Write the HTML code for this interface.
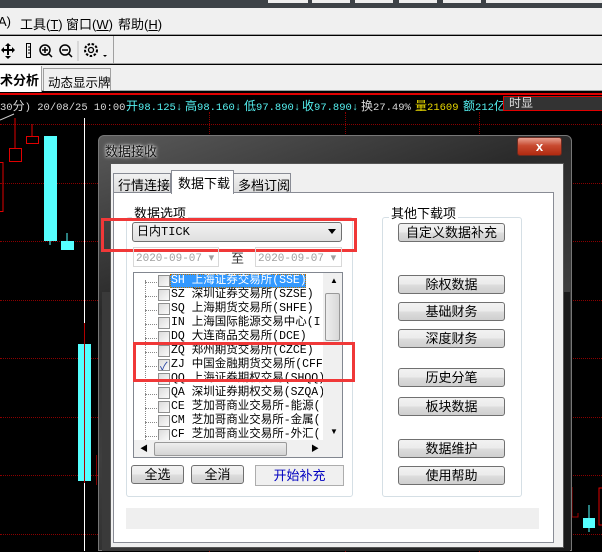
<!DOCTYPE html>
<html><head><meta charset="utf-8"><style>
*{margin:0;padding:0;box-sizing:border-box}
body{width:602px;height:551px;overflow:hidden;position:relative;background:#000;font-family:"Liberation Sans","Noto Sans CJK SC",sans-serif;font-size:12px}
.a{position:absolute}
.mono{font-family:"Liberation Mono","Noto Sans CJK SC",monospace;font-size:10.5px;white-space:nowrap}
.mono b{font-weight:normal;font-size:12px}
.hg{position:absolute;left:0;width:602px;height:0;border-top:1px dotted #8a0000}
.vg{position:absolute;top:112px;height:440px;width:0;border-left:1px dotted #8a0000}
.btn{position:absolute;height:19px;border:1px solid #707070;border-radius:3px;background:linear-gradient(#f2f2f2,#ebebeb 50%,#dddddd 51%,#cfcfcf);text-align:center;font-size:13px;line-height:17px;color:#000;white-space:nowrap}
.it{position:absolute;left:157px;height:14px;font-size:11.5px;line-height:14px;white-space:nowrap;font-family:"Liberation Mono","Noto Sans CJK SC",monospace}
.cb{position:absolute;left:158px;width:12px;height:12px;border:1px solid #8e8f8f;background:linear-gradient(135deg,#dcdcdc,#fafafa)}
.dot{position:absolute;left:145px;width:12px;border-top:1px dotted #888}
</style></head><body>
<div class="a" style="left:0;top:0;width:602px;height:8px;background:#3d4247"></div>
<div class="a" style="left:268px;top:0;width:40px;height:3px;background:#eee"></div>
<div class="a" style="left:312px;top:0;width:38px;height:3px;background:#eee"></div>
<div class="a" style="left:355px;top:0;width:38px;height:3px;background:#eee"></div>
<div class="a" style="left:399px;top:0;width:38px;height:3px;background:#eee"></div>
<div class="a" style="left:443px;top:0;width:38px;height:3px;background:#eee"></div>
<div class="a" style="left:486px;top:0;width:116px;height:3px;background:#eee"></div>
<div class="a" style="left:0;top:8px;width:602px;height:27px;background:#f0f0f0;border-bottom:1px solid #a0a0a0"></div>
<div class="a" style="left:-2px;top:14px;font-size:13px">A)</div>
<div class="a" style="left:20px;top:14px;font-size:13px">工具(<u>T</u>)</div>
<div class="a" style="left:66px;top:14px;font-size:13px">窗口(<u>W</u>)</div>
<div class="a" style="left:118px;top:14px;font-size:13px">帮助(<u>H</u>)</div>
<div class="a" style="left:0;top:36px;width:602px;height:28px;background:#f0f0f0;border-bottom:1px solid #a0a0a0"></div>
<div class="a" style="left:113px;top:36px;width:1px;height:27px;background:#a0a0a0"></div>
<svg class="a" style="left:0;top:40px" width="113" height="22">
<g fill="#000"><path d="M8 3l3 3h-6zM8 19l3-3h-6zM1 10l3-3v6zM15 10l-3-3v6z"/><rect x="4" y="9" width="8" height="2"/><rect x="7" y="5" width="2" height="10"/></g>
<rect x="26.5" y="3.5" width="4" height="14" fill="none" stroke="#000"/><path d="M28 7h2M28 10h2M28 13h2" stroke="#000"/>
<circle cx="45" cy="10" r="5" fill="none" stroke="#000" stroke-width="1.5"/><path d="M42 10h6M45 7v6M49 14l3 3" stroke="#000" stroke-width="1.5"/>
<circle cx="65" cy="10" r="5" fill="none" stroke="#000" stroke-width="1.5"/><path d="M62 10h6M69 14l3 3" stroke="#000" stroke-width="1.5"/>
<path d="M78 1v20" stroke="#c0c0c0"/>
<circle cx="91" cy="10" r="6" fill="none" stroke="#000" stroke-width="2" stroke-dasharray="2.5 1.6"/><circle cx="91" cy="10" r="2.5" fill="none" stroke="#000" stroke-width="1.3"/>
<path d="M103 15h4l-2 2z" fill="#000"/></svg>
<div class="a" style="left:0;top:65px;width:602px;height:26px;background:#f0f0f0;border-bottom:1px solid #a0a0a0"></div>
<div class="a" style="left:0;top:66px;width:42px;height:26px;background:#fff;border-right:1px solid #a0a0a0;font-size:13px;font-weight:bold;padding-top:4px;white-space:nowrap;overflow:hidden">术分析</div>
<div class="a" style="left:43px;top:68px;width:68px;height:23px;background:#f0f0f0;border:1px solid #a0a0a0;border-bottom:none;font-size:12.5px;padding:3px 0 0 4px;white-space:nowrap">动态显示牌</div>
<div class="a" style="left:0;top:93px;width:602px;height:2px;background:#e00000"></div>
<div class="a mono" style="left:0;top:97px;color:#d8d8d8">30<b>分</b>) 20/08/25 10:00</div>
<div class="a mono" style="left:126px;top:97px;color:#55f0f0"><b>开</b>98.125↓</div>
<div class="a mono" style="left:185px;top:97px;color:#55f0f0"><b>高</b>98.160↓</div>
<div class="a mono" style="left:244px;top:97px;color:#55f0f0"><b>低</b>97.890↓</div>
<div class="a mono" style="left:302px;top:97px;color:#55f0f0"><b>收</b>97.890↓</div>
<div class="a mono" style="left:361px;top:97px;color:#d8d8d8"><b>换</b>27.49%</div>
<div class="a mono" style="left:415px;top:97px;color:#e8d800"><b>量</b>21609</div>
<div class="a mono" style="left:463px;top:97px;color:#55f0f0"><b>额</b>212<b>亿</b></div>
<div class="a" style="left:503px;top:96px;width:110px;height:15px;border:1px solid #e00000;background:#333;color:#ddd;padding-left:5px;line-height:13px;font-size:12px">时显</div>
<div class="hg" style="top:124px"></div><div class="hg" style="top:183px"></div><div class="hg" style="top:241px"></div><div class="hg" style="top:300px"></div><div class="hg" style="top:358px"></div><div class="hg" style="top:417px"></div><div class="hg" style="top:475px"></div><div class="hg" style="top:534px"></div>
<div class="vg" style="left:209px"></div><div class="vg" style="left:345px"></div><div class="vg" style="left:479px"></div>
<div class="a" style="left:84px;top:118px;width:1px;height:433px;background:#fff"></div>
<svg class="a" style="left:0;top:110px" width="100" height="441">
<path d="M0 10l14-6" stroke="#ccc"/>
<path d="M15 8v30M32 14v12" stroke="#e00000"/>
<rect x="9.5" y="38.5" width="12" height="13" fill="none" stroke="#e00000"/>
<rect x="26.5" y="26.5" width="12" height="7" fill="none" stroke="#e00000"/>
<rect x="-1" y="52.5" width="4" height="49" fill="none" stroke="#e00000"/>
<rect x="44" y="26" width="13" height="105" fill="#55ffff"/><path d="M50 131v4" stroke="#55ffff"/>
<rect x="61" y="131" width="13" height="9" fill="#55ffff"/><path d="M67 123v8" stroke="#55ffff"/>
<rect x="78" y="234" width="13" height="137" fill="#55ffff"/><path d="M84.5 213v160" stroke="#b00000"/>
<path d="M96.5 345v30" stroke="#800000"/>
</svg>
<svg class="a" style="left:570px;top:480px" width="32" height="71">
<path d="M2 7v30h6v-4" stroke="#a00000" fill="none"/>
<rect x="13" y="38" width="12" height="10" fill="#55ffff"/><path d="M19 25v27" stroke="#55ffff"/>
<path d="M32 8h-3v37h3" stroke="#e00000" fill="none"/>
</svg>
<div class="a" style="left:98px;top:135px;width:474px;height:416px;border-radius:6px 6px 0 0;background:linear-gradient(160deg,#5a5a5a,#2a2a2a 30%,#3e3e3e 55%,#1c1c1c);border:1px solid #777"></div>
<div class="a" style="left:102px;top:292px;width:468px;height:259px;background:linear-gradient(90deg,#3a3a3a,#1a1a1a)"></div>
<div class="a" style="left:105px;top:141px;font-size:13px;text-shadow:0 0 4px #fff,0 0 2px #fff;color:#111">数据接收</div>
<div class="a" style="left:517px;top:137px;width:45px;height:19px;border:1px solid #6a2a20;border-radius:3px;background:linear-gradient(#e8a090,#c84a30 45%,#b02a10);color:#fff;font-weight:bold;text-align:center;font-size:13px;line-height:17px">x</div>
<div class="a" style="left:110px;top:163px;width:454px;height:385px;background:#f0f0f0;border:1px solid #555"></div>
<div class="a" style="left:113px;top:173px;width:58px;height:20px;border:1px solid #898c95;background:linear-gradient(#f2f2f2,#dcdcdc);font-size:13px;padding:1px 0 0 4px;white-space:nowrap">行情连接</div>
<div class="a" style="left:233px;top:173px;width:58px;height:20px;border:1px solid #898c95;background:linear-gradient(#f2f2f2,#dcdcdc);font-size:13px;padding:1px 0 0 4px;white-space:nowrap">多档订阅</div>
<div class="a" style="left:113px;top:192px;width:441px;height:351px;background:#fff;border:1px solid #898c95"></div>
<div class="a" style="left:171px;top:170px;width:63px;height:24px;border:1px solid #898c95;border-bottom:none;background:#fff;font-size:13px;padding:2px 0 0 6px;white-space:nowrap">数据下载</div>
<div class="a" style="left:126px;top:217px;width:227px;height:280px;border:1px solid #d5dfe5;border-radius:3px"></div>
<div class="a" style="left:132px;top:203px;background:#fff;padding:0 2px;font-size:13px">数据选项</div>
<div class="a" style="left:132px;top:222px;width:210px;height:20px;border:1px solid #707070;border-radius:3px;background:linear-gradient(#f2f2f2,#e0e0e0);font-size:12px;line-height:18px;padding-left:4px;font-family:'Liberation Mono','Noto Sans CJK SC',monospace">日内TICK</div>
<svg class="a" style="left:328px;top:229px" width="10" height="6"><path d="M0 0h8l-4 5z" fill="#000"/></svg>
<div class="a" style="left:101px;top:218px;width:256px;height:34px;border:3px solid #f03838"></div>
<div class="a mono" style="left:133px;top:247px;width:86px;height:20px;border:1px solid #d8d8d8;color:#a0a0a0;padding:3px 0 0 2px;font-size:11px">2020-09-07 ▾</div>
<div class="a" style="left:231px;top:248px;font-size:13px;color:#333">至</div>
<div class="a mono" style="left:255px;top:247px;width:87px;height:20px;border:1px solid #d8d8d8;color:#a0a0a0;padding:3px 0 0 2px;font-size:11px">2020-09-07 ▾</div>
<div class="a" style="left:133px;top:272px;width:210px;height:186px;border:1px solid #828790;background:#fff"></div>
<div class="a" style="left:145px;top:280px;height:160px;border-left:1px dotted #888"></div>
<div class="dot" style="top:282px"></div><div class="dot" style="top:296px"></div><div class="dot" style="top:310px"></div><div class="dot" style="top:324px"></div><div class="dot" style="top:338px"></div><div class="dot" style="top:352px"></div><div class="dot" style="top:366px"></div><div class="dot" style="top:380px"></div><div class="dot" style="top:394px"></div><div class="dot" style="top:408px"></div><div class="dot" style="top:422px"></div><div class="dot" style="top:436px"></div>
<div class="cb" style="top:275px"></div><div class="cb" style="top:289px"></div><div class="cb" style="top:303px"></div><div class="cb" style="top:317px"></div><div class="cb" style="top:331px"></div><div class="cb" style="top:345px"></div><div class="cb" style="top:359px"></div><div class="cb" style="top:373px"></div><div class="cb" style="top:387px"></div><div class="cb" style="top:401px"></div><div class="cb" style="top:415px"></div><div class="cb" style="top:429px"></div>
<div class="a" style="left:160px;top:362px;color:#1f3ca0;font-size:11px;line-height:10px">✓</div>
<div class="a" style="left:170px;top:274px;width:136px;height:14px;background:#3399ff;border:1px dotted #c07000"></div>
<div class="it" style="top:274px;left:171px;color:#fff">SH 上海证券交易所(SSE)</div>
<div class="it" style="top:288px;left:171px">SZ 深圳证券交易所(SZSE)</div>
<div class="it" style="top:302px;left:171px">SQ 上海期货交易所(SHFE)</div>
<div class="it" style="top:316px;left:171px">IN 上海国际能源交易中心(I</div>
<div class="it" style="top:330px;left:171px">DQ 大连商品交易所(DCE)</div>
<div class="it" style="top:344px;left:171px">ZQ 郑州期货交易所(CZCE)</div>
<div class="it" style="top:358px;left:171px">ZJ 中国金融期货交易所(CFF</div>
<div class="it" style="top:372px;left:171px">QQ 上海证券期权交易(SHQQ)</div>
<div class="it" style="top:386px;left:171px">QA 深圳证券期权交易(SZQA)</div>
<div class="it" style="top:400px;left:171px">CE 芝加哥商业交易所-能源(</div>
<div class="it" style="top:414px;left:171px">CM 芝加哥商业交易所-金属(</div>
<div class="it" style="top:428px;left:171px">CF 芝加哥商业交易所-外汇(</div>
<div class="a" style="left:323px;top:273px;width:19px;height:167px;background:#f0f0f0"></div>
<div class="a" style="left:330px;top:276px;font-size:8px">▲</div>
<div class="a" style="left:325px;top:293px;width:15px;height:48px;border:1px solid #999;border-radius:2px;background:linear-gradient(90deg,#eee,#d8d8d8)"></div>
<div class="a" style="left:330px;top:427px;font-size:8px">▼</div>
<div class="a" style="left:134px;top:440px;width:208px;height:17px;background:#f0f0f0"></div>
<div class="a" style="left:140px;top:443px;font-size:8px">◀</div>
<div class="a" style="left:154px;top:442px;width:133px;height:14px;border:1px solid #999;border-radius:2px;background:linear-gradient(#eee,#d4d4d4)"></div>
<div class="a" style="left:311px;top:443px;font-size:8px">▶</div>
<div class="a" style="left:133px;top:342px;width:222px;height:40px;border:3px solid #f03838"></div>
<div class="btn" style="left:131px;top:465px;width:53px">全选</div>
<div class="btn" style="left:191px;top:465px;width:53px">全消</div>
<div class="a" style="left:255px;top:465px;width:89px;height:21px;border:1px solid #adadad;background:#f0f0f0;color:#0000c0;text-align:center;font-size:13px;line-height:19px">开始补充</div>
<div class="a" style="left:382px;top:217px;width:140px;height:280px;border:1px solid #d5dfe5;border-radius:3px"></div>
<div class="a" style="left:389px;top:203px;background:#fff;padding:0 2px;font-size:13px">其他下载项</div>
<div class="btn" style="left:398px;top:223px;width:107px">自定义数据补充</div>
<div class="btn" style="left:398px;top:275px;width:107px">除权数据</div>
<div class="btn" style="left:398px;top:302px;width:107px">基础财务</div>
<div class="btn" style="left:398px;top:329px;width:107px">深度财务</div>
<div class="btn" style="left:398px;top:368px;width:107px">历史分笔</div>
<div class="btn" style="left:398px;top:397px;width:107px">板块数据</div>
<div class="btn" style="left:398px;top:439px;width:107px">数据维护</div>
<div class="btn" style="left:398px;top:466px;width:107px">使用帮助</div>
<div class="a" style="left:126px;top:508px;width:413px;height:21px;background:#efefef"></div>
</body></html>
